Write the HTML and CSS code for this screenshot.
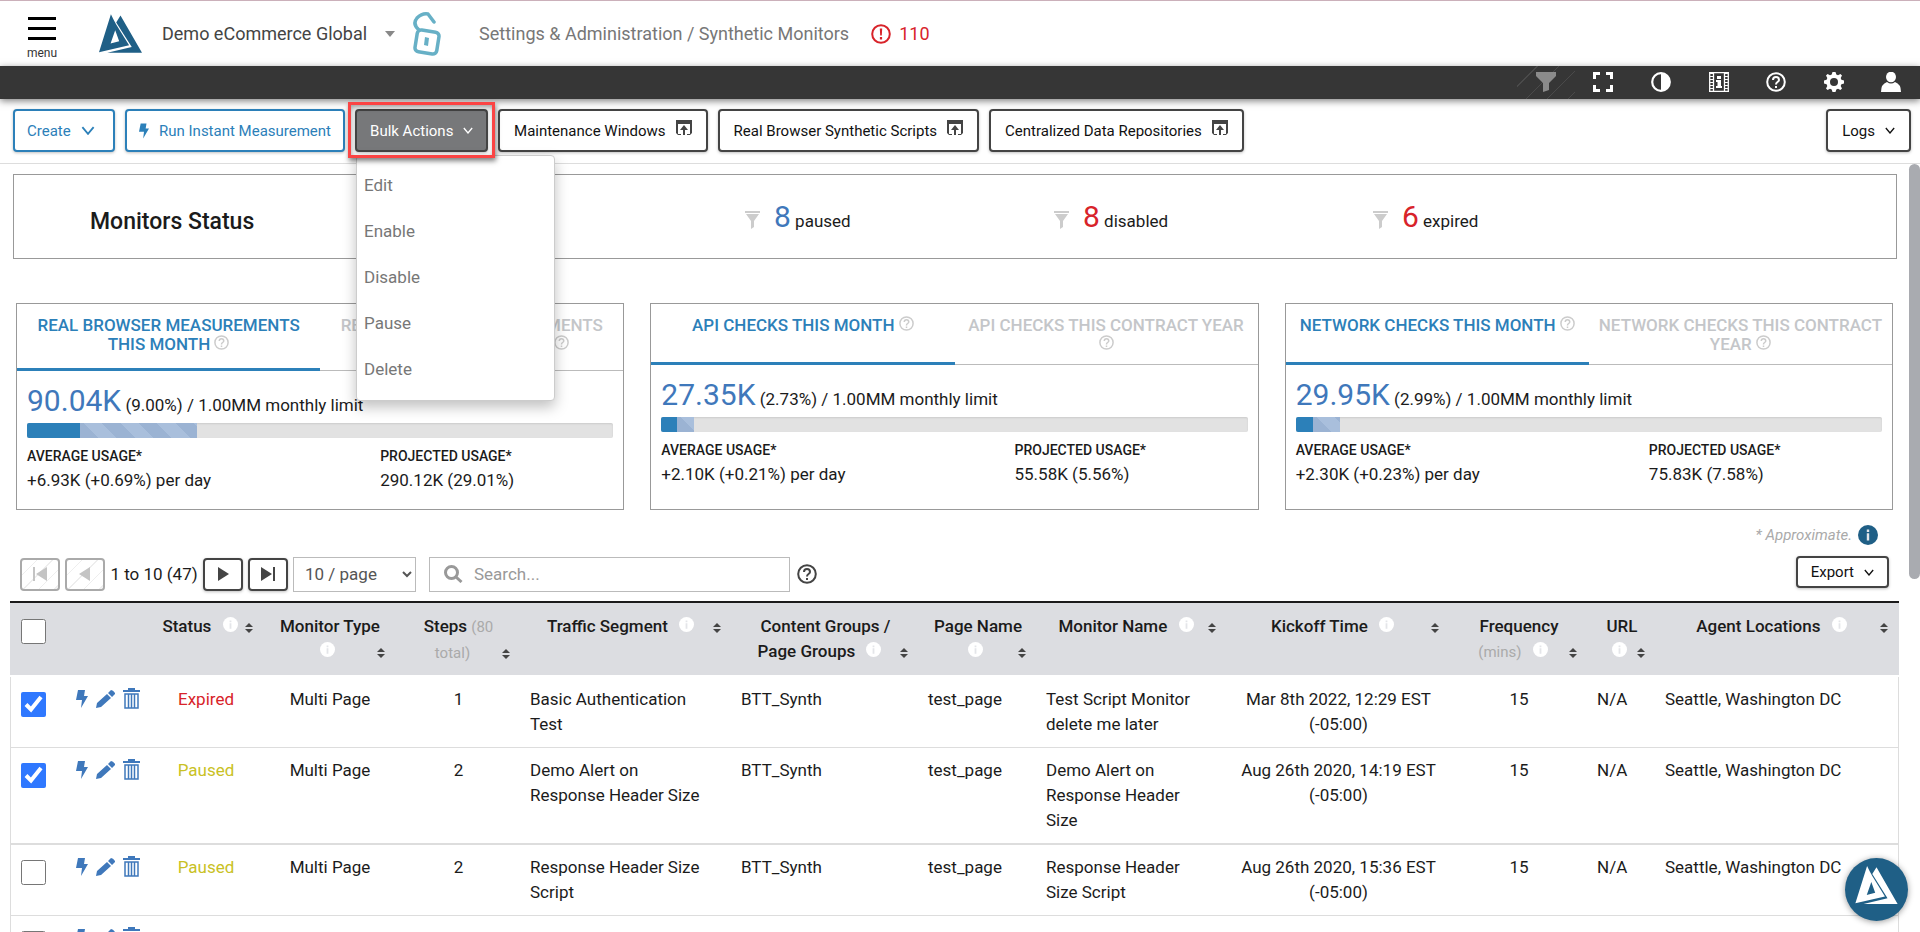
FILE: index.html
```html
<!DOCTYPE html>
<html lang="en">
<head>
  <meta charset="UTF-8" />
  <meta name="viewport" content="width=device-width, initial-scale=1" />
  <title>Synthetic Monitors</title>
  <link rel="stylesheet" href="styles.css">
</head>
<body>

<!-- icon sprite -->
<svg class="sprite" aria-hidden="true">
  <symbol id="logo" viewBox="297 43 130 117"><path fill-rule="evenodd" d="M333 43L297 158 388 137 349 74Q340 58 333 43ZM346 92L332 132 358 125Z"/><path d="M362 47L427 160H322L396 142 349 68Z"/></symbol>
  <symbol id="chevron" viewBox="0 0 12 8"><path d="M1 1L6 7 11 1" fill="none" stroke="currentColor" stroke-width="1.6"/></symbol>
  <symbol id="bolt" viewBox="0 0 12 18"><path d="M2 0H9L8 6H12L5 18 6 10H0Z"/></symbol>
  <symbol id="pencil" viewBox="0 0 19 18"><path d="M0 18L1 13 11 4 15 8 5 17ZM12 3L15 0Q17 0 19 3V4L16 7Z"/></symbol>
  <symbol id="trash" viewBox="0 0 17 21"><path d="M5 2V0H12V2H17V4H0V2Z"/><path d="M2 6H15V20H2ZM5.500 6V20M8.500 6V20M11.500 6V20" fill="none" stroke="currentColor" stroke-width="1.500"/></symbol>
  <symbol id="window-up" viewBox="0 0 16 15"><path d="M0 0H16V13L14 15H11V14H14V4H2V14H5V15H2L0 13ZM8 5L12 10H9V15H7V10H4Z"/></symbol>
  <symbol id="funnel-line" viewBox="0 0 15 18"><path d="M0 0H15V2H0ZM1 3H14L9 10V16L6 18V10Z"/></symbol>
  <symbol id="funnel" viewBox="0 0 20 20"><path d="M0 0H20V4L13 11V18L7 20V11L0 4Z"/></symbol>
  <symbol id="expand" viewBox="0 0 20 20"><path d="M1.500 7V1.500H7M13 1.500H18.500V7M18.500 13V18.500H13M7 18.500H1.500V13" fill="none" stroke="currentColor" stroke-width="3"/></symbol>
  <symbol id="contrast" viewBox="0 0 20 20"><circle cx="10" cy="10" r="8.800" fill="none" stroke="currentColor" stroke-width="2.200"/><path d="M10 1A9 9 0 0 1 10 19Z"/></symbol>
  <symbol id="film" viewBox="0 0 20 20"><path d="M.7 0V20M19.300 0V20M0 .5H20M0 19.500H20M4.500 0V20M15.500 0V20" fill="none" stroke="currentColor" stroke-width="1.300"/><path d="M2.600 1V20M17.400 1V20" fill="none" stroke="currentColor" stroke-width="3" stroke-dasharray="1 2"/><path d="M8 4H12V7H8ZM7 8H12V14H13V16H7V14H8.500V10H7Z"/></symbol>
  <symbol id="help" viewBox="0 0 20 20"><circle cx="10" cy="10" r="8.800" fill="none" stroke="currentColor" stroke-width="2"/><path d="M7 8Q7 5 10 5T13 8Q13 9 11.500 10T10 12.500" fill="none" stroke="currentColor" stroke-width="2"/><path d="M9 14H11V16H9Z"/></symbol>
  <symbol id="gear" viewBox="0 0 20 20"><path fill-rule="evenodd" d="M8.500 0H11.500L12.300 2.600 14 3.300 16.400 2 18 3.600 16.700 6 17.400 7.700 20 8.500V11.500L17.400 12.300 16.700 14 18 16.400 16.400 18 14 16.700 12.300 17.400 11.500 20H8.500L7.700 17.400 6 16.700 3.600 18 2 16.400 3.300 14 2.600 12.300 0 11.500V8.500L2.600 7.700 3.300 6 2 3.600 3.600 2 6 3.300 7.700 2.600ZM10 6A4 4 0 1 0 10 14A4 4 0 1 0 10 6Z"/></symbol>
  <symbol id="user" viewBox="0 0 20 20"><ellipse cx="10" cy="5" rx="5" ry="5.300"/><path d="M0 20Q0 12 6 10Q10 13 14 10Q20 12 20 20Z"/></symbol>
  <symbol id="info" viewBox="0 0 20 20"><circle cx="10" cy="10" r="10"/><path class="info-mark" d="M8.800 4.500H11.200V7H8.800ZM8.800 8.200H11.200V15.500H8.800Z"/></symbol>
  <symbol id="alert" viewBox="0 0 20 20"><circle cx="10" cy="10" r="8.800" fill="none" stroke="currentColor" stroke-width="2"/><path d="M8.800 4.500H11.200L10.800 11.500H9.200ZM8.900 13H11.100V15.500H8.900Z"/></symbol>
  <symbol id="sort" viewBox="0 0 8 10"><path d="M4 0L8 4H0ZM4 10L8 6H0Z"/></symbol>
  <symbol id="search" viewBox="0 0 19 18"><circle cx="7.500" cy="7.500" r="6" fill="none" stroke="currentColor" stroke-width="3"/><path d="M11.500 11.500L17.500 17" stroke="currentColor" stroke-width="3"/></symbol>
  <symbol id="lock" viewBox="0 0 28 46"><g fill="none" stroke="currentColor" stroke-width="3.500" stroke-linecap="round"><rect x="3" y="20" width="22" height="22" rx="4" transform="rotate(9 14 31)"/><path d="M6 19Q-1 13 4 7Q9 2 15 3L21 11"/></g><path d="M12 26L16 27 15 35 11 34Z"/></symbol>
</svg>

<header class="topbar">
  <button class="menu-btn"><span class="bars"></span>menu</button>
  <svg class="logo"><use href="#logo"/></svg>
  <button class="account">Demo eCommerce Global<span class="caret"></span></button>
  <svg class="lock"><use href="#lock"/></svg>
  <span class="breadcrumb">Settings &amp; Administration / Synthetic Monitors</span>
  <a class="alerts" href="#"><svg><use href="#alert"/></svg>110</a>
</header>

<nav class="darkbar">
  <div class="tools">
    <button class="off" aria-label="Filter" disabled><svg><use href="#funnel"/></svg></button>
    <button aria-label="Full screen"><svg><use href="#expand"/></svg></button>
    <button aria-label="Contrast"><svg><use href="#contrast"/></svg></button>
    <button aria-label="Tour"><svg><use href="#film"/></svg></button>
    <button aria-label="Help"><svg><use href="#help"/></svg></button>
    <button aria-label="Settings"><svg><use href="#gear"/></svg></button>
    <button aria-label="Account"><svg><use href="#user"/></svg></button>
  </div>
</nav>

<div class="toolbar">
  <button class="btn blue create">Create <svg class="chev-lg"><use href="#chevron"/></svg></button>
  <button class="btn blue run"><svg class="bolt"><use href="#bolt"/></svg> Run Instant Measurement</button>
  <div class="dropdown">
    <button class="btn bulk" aria-expanded="true">Bulk Actions <svg class="chev"><use href="#chevron"/></svg></button>
    <ul class="dropdown-menu">
      <li><a href="#">Edit</a></li>
      <li><a href="#">Enable</a></li>
      <li><a href="#">Disable</a></li>
      <li><a href="#">Pause</a></li>
      <li><a href="#">Delete</a></li>
    </ul>
  </div>
  <button class="btn">Maintenance Windows <svg class="win"><use href="#window-up"/></svg></button>
  <button class="btn">Real Browser Synthetic Scripts <svg class="win"><use href="#window-up"/></svg></button>
  <button class="btn">Centralized Data Repositories <svg class="win"><use href="#window-up"/></svg></button>
  <button class="btn logs">Logs <svg class="chev"><use href="#chevron"/></svg></button>
</div>

<main class="content">
  <section class="status">
    <h2>Monitors Status</h2>
    <div class="count"><svg><use href="#funnel-line"/></svg><b>8</b> paused</div>
    <div class="count red"><svg><use href="#funnel-line"/></svg><b>8</b> disabled</div>
    <div class="count red"><svg><use href="#funnel-line"/></svg><b>6</b> expired</div>
  </section>

  <section class="cards">
    <article class="card">
      <div class="tabs tall">
        <a class="active" href="#">REAL BROWSER MEASUREMENTS THIS MONTH <svg><use href="#help"/></svg></a>
        <a href="#">REAL BROWSER MEASUREMENTS THIS CONTRACT YEAR <svg><use href="#help"/></svg></a>
      </div>
      <div class="usage">
        <p class="total"><b>90.04K</b> (9.00%) / 1.00MM <small>monthly limit</small></p>
        <div class="bar"><i class="used" style="width: 9%"></i><i class="projected" style="width: 20%"></i></div>
        <dl>
          <div><dt>AVERAGE USAGE*</dt><dd>+6.93K (+0.69%) per day</dd></div>
          <div><dt>PROJECTED USAGE*</dt><dd>290.12K (29.01%)</dd></div>
        </dl>
      </div>
    </article>
    <article class="card">
      <div class="tabs">
        <a class="active" href="#">API CHECKS THIS MONTH <svg><use href="#help"/></svg></a>
        <a href="#">API CHECKS THIS CONTRACT YEAR <svg><use href="#help"/></svg></a>
      </div>
      <div class="usage">
        <p class="total"><b>27.35K</b> (2.73%) / 1.00MM <small>monthly limit</small></p>
        <div class="bar"><i class="used" style="width: 2.73%"></i><i class="projected" style="width: 2.83%"></i></div>
        <dl>
          <div><dt>AVERAGE USAGE*</dt><dd>+2.10K (+0.21%) per day</dd></div>
          <div><dt>PROJECTED USAGE*</dt><dd>55.58K (5.56%)</dd></div>
        </dl>
      </div>
    </article>
    <article class="card">
      <div class="tabs">
        <a class="active" href="#">NETWORK CHECKS THIS MONTH <svg><use href="#help"/></svg></a>
        <a href="#">NETWORK CHECKS THIS CONTRACT YEAR <svg><use href="#help"/></svg></a>
      </div>
      <div class="usage">
        <p class="total"><b>29.95K</b> (2.99%) / 1.00MM <small>monthly limit</small></p>
        <div class="bar"><i class="used" style="width: 2.99%"></i><i class="projected" style="width: 4.59%"></i></div>
        <dl>
          <div><dt>AVERAGE USAGE*</dt><dd>+2.30K (+0.23%) per day</dd></div>
          <div><dt>PROJECTED USAGE*</dt><dd>75.83K (7.58%)</dd></div>
        </dl>
      </div>
    </article>
  </section>

  <p class="approx">* Approximate. <svg><use href="#info"/></svg></p>

  <div class="pager">
    <button class="pg" aria-label="First page" disabled><svg viewBox="0 0 16 16"><path d="M1 1H3V15H1ZM15 1V15L4 8Z"/></svg></button>
    <button class="pg" aria-label="Previous page" disabled><svg viewBox="0 0 16 16"><path d="M13 1V15L2 8Z"/></svg></button>
    <span class="range">1 to 10 (47)</span>
    <button class="pg" aria-label="Next page"><svg viewBox="0 0 16 16"><path d="M3 1V15L14 8Z"/></svg></button>
    <button class="pg" aria-label="Last page"><svg viewBox="0 0 16 16"><path d="M13 1H15V15H13ZM1 1V15L12 8Z"/></svg></button>
    <select class="page-size" aria-label="Rows per page"><option>10 / page</option></select>
    <label class="search"><svg><use href="#search"/></svg><input type="text" placeholder="Search..." aria-label="Search"></label>
    <svg class="search-help"><use href="#help"/></svg>
    <button class="btn export">Export <svg class="chev"><use href="#chevron"/></svg></button>
  </div>

  <table class="monitors">
    <colgroup>
      <col class="w-check"><col class="w-actions"><col class="w-status"><col class="w-type"><col class="w-steps"><col class="w-traffic"><col class="w-group"><col class="w-page"><col class="w-name"><col class="w-kickoff"><col class="w-freq"><col class="w-url"><col class="w-agent">
    </colgroup>
    <thead>
      <tr>
        <th><input type="checkbox" aria-label="Select all"></th>
        <th></th>
        <th>Status <svg class="info"><use href="#info"/></svg><svg class="sort"><use href="#sort"/></svg></th>
        <th>Monitor Type <svg class="info"><use href="#info"/></svg><svg class="sort"><use href="#sort"/></svg></th>
        <th>Steps <small>(80 total)</small><svg class="sort"><use href="#sort"/></svg></th>
        <th>Traffic Segment <svg class="info"><use href="#info"/></svg><svg class="sort"><use href="#sort"/></svg></th>
        <th>Content Groups / Page Groups <svg class="info"><use href="#info"/></svg><svg class="sort"><use href="#sort"/></svg></th>
        <th>Page Name <svg class="info"><use href="#info"/></svg><svg class="sort"><use href="#sort"/></svg></th>
        <th>Monitor Name <svg class="info"><use href="#info"/></svg><svg class="sort"><use href="#sort"/></svg></th>
        <th>Kickoff Time <svg class="info"><use href="#info"/></svg><svg class="sort"><use href="#sort"/></svg></th>
        <th>Frequency <small>(mins)</small> <svg class="info"><use href="#info"/></svg><svg class="sort"><use href="#sort"/></svg></th>
        <th>URL <svg class="info"><use href="#info"/></svg><svg class="sort"><use href="#sort"/></svg></th>
        <th>Agent Locations <svg class="info"><use href="#info"/></svg><svg class="sort"><use href="#sort"/></svg></th>
      </tr>
    </thead>
    <tbody>
      <tr>
        <td><input type="checkbox" aria-label="Select monitor" checked></td>
        <td class="actions"><a href="#" aria-label="Run"><svg class="bolt"><use href="#bolt"/></svg></a><a href="#" aria-label="Edit"><svg class="pencil"><use href="#pencil"/></svg></a><a href="#" aria-label="Delete"><svg class="trash"><use href="#trash"/></svg></a></td>
        <td class="mid expired">Expired</td>
        <td class="mid">Multi Page</td>
        <td class="mid">1</td>
        <td>Basic Authentication Test</td>
        <td>BTT_Synth</td>
        <td>test_page</td>
        <td>Test Script Monitor delete me later</td>
        <td class="mid">Mar 8th 2022, 12:29 EST (-05:00)</td>
        <td class="mid">15</td>
        <td>N/A</td>
        <td>Seattle, Washington DC</td>
      </tr>
      <tr class="thick">
        <td><input type="checkbox" aria-label="Select monitor" checked></td>
        <td class="actions"><a href="#" aria-label="Run"><svg class="bolt"><use href="#bolt"/></svg></a><a href="#" aria-label="Edit"><svg class="pencil"><use href="#pencil"/></svg></a><a href="#" aria-label="Delete"><svg class="trash"><use href="#trash"/></svg></a></td>
        <td class="mid paused">Paused</td>
        <td class="mid">Multi Page</td>
        <td class="mid">2</td>
        <td>Demo Alert on Response Header Size</td>
        <td>BTT_Synth</td>
        <td>test_page</td>
        <td>Demo Alert on Response Header Size</td>
        <td class="mid">Aug 26th 2020, 14:19 EST (-05:00)</td>
        <td class="mid">15</td>
        <td>N/A</td>
        <td>Seattle, Washington DC</td>
      </tr>
      <tr>
        <td><input type="checkbox" aria-label="Select monitor"></td>
        <td class="actions"><a href="#" aria-label="Run"><svg class="bolt"><use href="#bolt"/></svg></a><a href="#" aria-label="Edit"><svg class="pencil"><use href="#pencil"/></svg></a><a href="#" aria-label="Delete"><svg class="trash"><use href="#trash"/></svg></a></td>
        <td class="mid paused">Paused</td>
        <td class="mid">Multi Page</td>
        <td class="mid">2</td>
        <td>Response Header Size Script</td>
        <td>BTT_Synth</td>
        <td>test_page</td>
        <td>Response Header Size Script</td>
        <td class="mid">Aug 26th 2020, 15:36 EST (-05:00)</td>
        <td class="mid">15</td>
        <td>N/A</td>
        <td>Seattle, Washington DC</td>
      </tr>
      <tr>
        <td><input type="checkbox" aria-label="Select monitor"></td>
        <td class="actions"><a href="#" aria-label="Run"><svg class="bolt"><use href="#bolt"/></svg></a><a href="#" aria-label="Edit"><svg class="pencil"><use href="#pencil"/></svg></a><a href="#" aria-label="Delete"><svg class="trash"><use href="#trash"/></svg></a></td>
        <td class="mid paused">Paused</td>
        <td class="mid">Multi Page</td>
        <td class="mid">2</td>
        <td>Check Header</td>
        <td>BTT_Synth</td>
        <td>test_page</td>
        <td>Check Header</td>
        <td class="mid">Aug 26th 2020, 15:36 EST (-05:00)</td>
        <td class="mid">15</td>
        <td>N/A</td>
        <td>Seattle, Washington DC</td>
      </tr>
    </tbody>
  </table>
  <div class="scroll-thumb"></div>
</main>

<button class="fab" aria-label="Assistant"><svg><use href="#logo"/></svg></button>

</body>
</html>
```
FILE: styles.css
```css
*, *::before {
  box-sizing: border-box;
}
body {
  margin: 0;
  height: 100vh;
  display: flex;
  flex-direction: column;
  overflow: hidden;
  background: #fff;
  color: #1b1b1b;
  font-family: Roboto, "Liberation Sans", sans-serif;
  font-size: 17px;
  border-top: 1px solid #cbb0ba;
}
button, input, select {
  font-family: inherit;
  color: inherit;
}
button {
  background: none;
  border: none;
  padding: 0;
  cursor: pointer;
}
a {
  text-decoration: none;
}
svg {
  fill: currentColor;
  flex: none;
}
.sprite {
  position: absolute;
  width: 0;
  height: 0;
}

/* header */
.topbar {
  height: 65px;
  flex: none;
  display: flex;
  align-items: center;
  padding-left: 25px;
}
.menu-btn {
  display: flex;
  flex-direction: column;
  align-items: center;
  gap: 4px;
  width: 34px;
  padding-top: 11px;
  font-size: 12px;
  line-height: 18px;
  color: #333;
}
.bars {
  width: 28px;
  height: 23px;
  border-top: 3px solid #000;
  border-bottom: 3px solid #000;
  background: linear-gradient(#000, #000) center / 100% 3px no-repeat;
}
.logo {
  width: 43px;
  height: 39px;
  margin-left: 40px;
  color: #1f5f86;
}
.account {
  display: flex;
  align-items: center;
  margin-left: 20px;
  font-size: 18px;
  color: #444;
}
.caret {
  margin-left: 18px;
  border: 5px solid transparent;
  border-top: 6px solid #888;
  border-bottom: 0;
}
.lock {
  width: 28px;
  height: 46px;
  margin-left: 18px;
  color: #67b0c6;
}
.breadcrumb {
  margin-left: 38px;
  font-size: 18px;
  color: #777;
}
.alerts {
  display: flex;
  align-items: center;
  gap: 8px;
  margin-left: 22px;
  font-size: 18px;
  color: #d8232a;
}
.alerts svg {
  width: 20px;
  height: 20px;
}

.darkbar {
  height: 33px;
  flex: none;
  background: #363636;
  box-shadow: 0 2px 7px rgb(0 0 0 / 0.5);
  z-index: 1;
}
.tools {
  width: 403px;
  height: 100%;
  margin-left: auto;
  display: flex;
}
.tools button {
  flex: 1;
  display: flex;
  align-items: center;
  justify-content: center;
  padding-bottom: 2px;
  color: #fff;
}
.tools svg {
  width: 20px;
  height: 20px;
}
.tools .off {
  color: #8b8b8b;
  background: repeating-linear-gradient(135deg, transparent 0 14px, #4a4a4a 14px 15px);
}

/* buttons */
.toolbar {
  flex: none;
  height: 65px;
  display: flex;
  gap: 10px;
  padding: 10px 9px 11px 13px;
  border-bottom: 1px solid #ddd;
}
.btn {
  height: 43px;
  display: flex;
  align-items: center;
  gap: 10px;
  padding: 0 14px;
  border: 2px solid #444;
  border-radius: 4px;
  background: #fff;
  font-size: 15px;
  color: #111;
  white-space: nowrap;
  box-shadow: 0 1px 3px rgb(0 0 0 / 0.25);
}
.btn.blue {
  padding: 0 12px;
  border-color: #2c80b9;
  color: #2c80b9;
}
.btn.create {
  width: 102px;
}
.chev {
  width: 10px;
  height: 7px;
}
.chev-lg {
  width: 14px;
  height: 9px;
}
.btn .bolt {
  width: 10px;
  height: 16px;
}
.win {
  width: 16px;
  height: 15px;
  margin-bottom: 6px;
  color: #444;
}
.dropdown {
  position: relative;
  z-index: 2;
}
.btn.bulk {
  width: 133px;
  padding: 0 13px;
  background: #77787a;
  color: #fff;
}
/* red call-out round the open button */
.dropdown::before {
  content: "";
  position: absolute;
  inset: -7px -7px -6px;
  z-index: 1;
  border: 3px solid #fb4444;
  box-shadow: 1px 3px 5px rgb(0 0 0 / 0.5), inset 1px 3px 5px rgb(0 0 0 / 0.3);
  pointer-events: none;
}
.dropdown-menu {
  position: absolute;
  top: 46px;
  left: 1px;
  width: 199px;
  height: 246px;
  margin: 0;
  padding: 6px 7px;
  list-style: none;
  background: #fff;
  border: 1px solid #ccc;
  border-radius: 4px;
  box-shadow: 0 6px 14px rgb(0 0 0 / 0.25);
}
.dropdown-menu a {
  display: block;
  line-height: 46px;
  color: #777;
}
.logs {
  margin-left: auto;
}

/* status strip */
.content {
  flex: 1;
  min-height: 0;
  position: relative;
  overflow: hidden;
  padding: 10px 21px 0 10px;
}
.status {
  display: grid;
  grid-template-columns: 731fr 309fr 319fr 523fr;
  align-items: center;
  height: 85px;
  margin: 0 2px 0 3px;
  border: 1px solid #999;
}
.status h2 {
  margin: 0;
  padding: 9px 0 0 76px;
  font-size: 23px;
  font-weight: 500;
}
.count b {
  font-size: 30px;
  font-weight: 400;
  color: #3f78bb;
}
.count svg {
  width: 15px;
  height: 18px;
  margin-right: 14px;
  vertical-align: -2px;
  color: #ccc;
}
.count.red b {
  color: #d8232a;
}

/* usage cards */
.cards {
  display: grid;
  grid-template-columns: repeat(3, 1fr);
  gap: 26px;
  margin: 44px 6px 0 6px;
}
.card {
  height: 207px;
  border: 1px solid #999;
}
.tabs {
  display: flex;
  height: 61px;
}
.tabs.tall {
  height: 67px;
}
.tabs a {
  flex: 1 1 0;
  padding: 12px 6px 0;
  border-bottom: 1px solid #bbb;
  font-weight: 500;
  line-height: 19px;
  color: #c4c6c9;
  text-align: center;
}
.tabs a.active {
  color: #2c80b9;
  border-bottom: 3px solid #2c80b9;
}
.tabs svg {
  width: 15px;
  height: 15px;
  color: #ccc;
  vertical-align: 0;
}
.usage {
  padding: 12px 10px;
}
.total {
  margin: 0;
  line-height: 36px;
}
.total b {
  font-size: 30px;
  font-weight: 400;
  color: #3f78bb;
}
.total small {
  font-size: 17px;
}
.bar {
  display: flex;
  height: 15px;
  border-radius: 2px;
  overflow: hidden;
  background: #e2e2e2;
  box-shadow: inset 0 1px 2px rgb(0 0 0 / 0.1);
}
.used {
  background: #2c80b9;
}
.projected {
  background: repeating-linear-gradient(45deg, #9bb3d3 0 13px, #a9bfdc 13px 26px);
}
.usage dl {
  display: grid;
  grid-template-columns: 353fr 233fr;
  margin: 8px 0 0;
}
.usage dt {
  font-size: 14px;
  font-weight: 500;
  line-height: 20px;
}
.usage dd {
  margin: 0;
  line-height: 28px;
}
.approx {
  display: flex;
  justify-content: flex-end;
  align-items: center;
  gap: 6px;
  height: 20px;
  margin: 15px 21px 0 0;
  font-size: 15px;
  font-style: italic;
  color: #aaa;
}
.approx svg {
  width: 20px;
  height: 20px;
  color: #1f5f86;
}
.info-mark {
  fill: #e4e5e9;
}

/* paging and search */
.pager {
  display: flex;
  align-items: center;
  height: 36px;
  margin: 11px 10px 9px;
}
.pg {
  width: 40px;
  height: 33px;
  display: flex;
  align-items: center;
  justify-content: center;
  border: 2px solid #444;
  border-radius: 4px;
  color: #444;
  box-shadow: 0 1px 3px rgb(0 0 0 / 0.25);
}
.pg + .pg {
  margin-left: 5px;
}
.pg svg {
  width: 16px;
  height: 16px;
}
.pg:disabled {
  border-color: #aaa;
  color: #c4c4c4;
  background: repeating-linear-gradient(135deg, #fff 0 10px, #eee 10px 11px);
  box-shadow: none;
}
.range {
  width: 98px;
  text-align: center;
}
.page-size {
  width: 123px;
  height: 35px;
  margin: 0 13px 0 5px;
  padding: 0 7px;
  border: 1px solid #bbb;
  border-radius: 0;
  background: #fff;
  font-size: 17px;
  color: #555;
}
.search {
  display: flex;
  align-items: center;
  gap: 11px;
  width: 361px;
  height: 35px;
  padding-left: 14px;
  border: 1px solid #bbb;
  color: #999;
}
.search svg {
  width: 19px;
  height: 18px;
}
.search input {
  flex: 1;
  min-width: 0;
  border: none;
  outline: none;
  background: none;
  padding: 0;
  font-size: 17px;
}
.search input::placeholder {
  color: #999;
}
.search-help {
  width: 20px;
  height: 20px;
  margin-left: 7px;
  color: #444;
}
.btn.export {
  height: 32px;
  margin: 0 0 4px auto;
  padding: 0 13px;
}

/* monitors table */
.monitors {
  width: 100%;
  table-layout: fixed;
  border-collapse: separate;
  border-spacing: 0;
  line-height: 25px;
}
.w-check { width: 57px; }
.w-actions { width: 81px; }
.w-status { width: 116px; }
.w-type { width: 132px; }
.w-steps { width: 125px; }
.w-traffic { width: 211px; }
.w-group { width: 187px; }
.w-page { width: 118px; }
.w-name { width: 190px; }
.w-kickoff { width: 223px; }
.w-freq { width: 138px; }
.w-url { width: 68px; }
.w-agent { width: 243px; }

.monitors th {
  padding: 11px 9px 9px;
  vertical-align: top;
  font-weight: 500;
  text-align: center;
  background: #dcdde1;
  background-clip: padding-box;
  border-top: 2px solid #1b1b1b;
  border-bottom: 2px solid #fff;
}
.monitors th small {
  font-size: 15px;
  font-weight: 400;
  color: #aaa;
}
.monitors td {
  padding: 10px 24px 10px 9px;
  vertical-align: top;
  border-bottom: 1px solid #ddd;
}
.monitors td:first-child {
  padding-left: 8px;
  border-left: 1px solid #ddd;
}
.monitors td:last-child {
  border-right: 1px solid #ddd;
}
.monitors .thick td {
  border-bottom-width: 2px;
}
.monitors .mid {
  padding-right: 9px;
  text-align: center;
}
.monitors input {
  display: block;
  width: 25px;
  height: 25px;
  margin: 5px 0 0 2px;
  accent-color: #2f78ff;
}
.info {
  width: 15px;
  height: 15px;
  margin-left: 7px;
  vertical-align: 0;
  color: #fff;
}
.sort {
  float: right;
  width: 12px;
  height: 10px;
  margin-top: 9px;
  color: #444;
}
.monitors .actions {
  padding: 8px 0 10px 9px;
  white-space: nowrap;
}
.actions a {
  margin-right: 8px;
  color: #3f78bb;
}
.actions svg {
  vertical-align: middle;
}
.actions .bolt {
  width: 12px;
  height: 18px;
}
.actions .pencil {
  width: 19px;
  height: 18px;
}
.actions .trash {
  width: 17px;
  height: 21px;
}
.expired {
  color: #d8232a;
}
.paused {
  color: #c9c124;
}

.scroll-thumb {
  position: absolute;
  top: 0;
  right: 0;
  width: 11px;
  height: 54%;
  border-radius: 6px;
  background: #a9abb0;
}
.fab {
  position: fixed;
  right: 12px;
  bottom: 11px;
  z-index: 3;
  width: 63px;
  height: 63px;
  border-radius: 50%;
  background: #1f5f86;
  color: #fff;
  box-shadow: 0 1px 6px rgb(0 0 0 / 0.4);
}
.fab svg {
  width: 43px;
  height: 38px;
  margin-top: -6px;
}
```
